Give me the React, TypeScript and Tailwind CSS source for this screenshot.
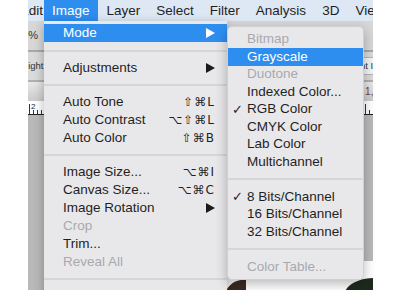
import React from 'react';

type Item =
  | { sep: true; h?: string }
  | { label: string; shortcut?: string; arrow?: boolean; disabled?: boolean; active?: boolean; checked?: boolean; sep?: false };

const menuBar = ['Image', 'Layer', 'Select', 'Filter', 'Analysis', '3D', 'View'];

const imageMenu: Item[] = [
  { label: 'Mode', arrow: true, active: true },
  { sep: true, h: 'h-[17px]' },
  { label: 'Adjustments', arrow: true },
  { sep: true },
  { label: 'Auto Tone', shortcut: '⇧⌘L' },
  { label: 'Auto Contrast', shortcut: '⌥⇧⌘L' },
  { label: 'Auto Color', shortcut: '⇧⌘B' },
  { sep: true },
  { label: 'Image Size...', shortcut: '⌥⌘I' },
  { label: 'Canvas Size...', shortcut: '⌥⌘C' },
  { label: 'Image Rotation', arrow: true },
  { label: 'Crop', disabled: true },
  { label: 'Trim...' },
  { label: 'Reveal All', disabled: true },
  { sep: true },
  { label: 'Duplicate...' },
  { label: 'Apply Image...' },
];

const modeMenu: Item[] = [
  { label: 'Bitmap', disabled: true },
  { label: 'Grayscale', active: true },
  { label: 'Duotone', disabled: true },
  { label: 'Indexed Color...' },
  { label: 'RGB Color', checked: true },
  { label: 'CMYK Color' },
  { label: 'Lab Color' },
  { label: 'Multichannel' },
  { sep: true },
  { label: '8 Bits/Channel', checked: true },
  { label: '16 Bits/Channel' },
  { label: '32 Bits/Channel' },
  { sep: true },
  { label: 'Color Table...', disabled: true },
];

const Arrow = ({ white }: { white?: boolean }) => (
  <svg width="9" height="10" viewBox="0 0 9 10">
    <polygon points="0,0 9,5 0,10" fill={white ? '#ffffff' : '#1a1a1a'} />
  </svg>
);

const textColor = (it: { disabled?: boolean; active?: boolean }) =>
  it.active ? 'text-white bg-[#2d8ef0]' : it.disabled ? 'text-[#a9a9ab]' : 'text-[#1f1f1f]';

const Ruler = () => (
  <svg width="345" height="13" className="block">
    {Array.from({ length: 88 }).map((_, i) => (
      <line key={i} x1={i * 4 + 1.5} x2={i * 4 + 1.5} y1={i % 4 === 0 ? 3 : 9} y2={13} stroke="#333" strokeWidth="1" />
    ))}
    <text x="3" y="8" fontSize="8" fill="#222" fontFamily="Liberation Sans">2</text>
  </svg>
);

const App: React.FC = () => {
  return (
    <div className="relative w-[402px] h-[290px] overflow-hidden bg-white font-['Liberation_Sans','DejaVu_Sans',sans-serif]">
      <div className="flex h-full">
        <div className="w-[28px] shrink-0 bg-white" />

        {/* app window */}
        <div className="w-[345px] shrink-0 flex flex-col overflow-hidden bg-[#b9b9b9]">
          <div className="h-[21px] shrink-0 flex items-center bg-[#dde8f4] text-[13.5px] text-[#1f1f1f] leading-[21px] whitespace-nowrap">
            <div className="w-[16px] shrink-0 flex justify-end overflow-hidden pr-[1px]">
              <span>Edit</span>
            </div>
            {menuBar.map((m) => (
              <span key={m} className={`px-2 ${m === 'Image' ? 'bg-[#2d8ef0] text-white' : ''} ${m === 'Layer' ? 'ml-[1px]' : ''}`}>
                {m}
              </span>
            ))}
          </div>

          <div className="h-[31px] shrink-0 flex items-center bg-[#d7d7d7] border-b-2 border-[#a8a8a8] text-[11px] text-[#333] whitespace-nowrap">
            <span className="ml-[-18px]">100%</span>
          </div>

          <div className="h-[30px] shrink-0 flex items-center bg-[#dadada] border-b-2 border-[#b0b0b0] text-[9.5px] text-[#333] whitespace-nowrap">
            <span className="ml-[-12px]">Height:</span>
            <span className="ml-auto mr-[-28px] px-[3px] py-[1px] bg-[#f4f4f4] border border-[#b5b5b5] rounded-[2px] text-[9.5px]">Front Image</span>
          </div>

          <div className="h-[19px] shrink-0 flex items-center bg-gradient-to-b from-[#e8e8e8] to-[#cbcbcb] text-[10px] whitespace-nowrap">
            <span className="ml-auto mr-[-6px] text-[#7a3a2a]">1,1</span>
          </div>

          <div className="h-[14px] shrink-0 bg-white border-b border-[#222] overflow-hidden">
            <Ruler />
          </div>

          <div className="flex-1 flex flex-col pt-[146px] pl-[140px]">
            <div className="flex-1 bg-white">
              <svg width="205" height="30" className="block">
                <path d="M58 30 C 62 22, 70 18, 78 19 L 78 30 Z" fill="#3b2a22" />
                <path d="M177 30 C 182 21, 195 17, 205 17 L 205 30 Z" fill="#1e2a1e" />
              </svg>
            </div>
          </div>
        </div>

        <div className="flex-1 bg-white" />
      </div>

      {/* Image menu */}
      <div className="absolute left-[44px] top-[21px] w-[183px] h-[300px] pt-[3px] bg-[#e8e8eb] shadow-[0_3px_10px_rgba(0,0,0,0.3)] text-[13.5px] whitespace-nowrap">
        {imageMenu.map((it, i) =>
          it.sep ? (
            <div key={i} className={`${it.h ?? 'h-[16px]'} flex items-center`}>
              <div className="w-full h-[2px] bg-[#d6d6d9]" />
            </div>
          ) : (
            <div key={i} className={`h-[18px] flex items-center justify-between pl-[19px] pr-[12px] ${textColor(it)}`}>
              <span>{it.label}</span>
              {it.arrow && <Arrow white={it.active} />}
              {it.shortcut && <span className="font-['DejaVu_Sans',sans-serif] text-[12px] tracking-[1px]">{it.shortcut}</span>}
            </div>
          )
        )}
      </div>

      {/* Mode submenu */}
      <div className="absolute left-[227px] top-[26px] w-[137px] h-[254px] pt-[3.5px] rounded-[5px] bg-[#e8e8eb] border border-[#d0d0d3] shadow-[0_4px_12px_rgba(0,0,0,0.28)] text-[13.5px] whitespace-nowrap overflow-hidden">
        {modeMenu.map((it, i) =>
          it.sep ? (
            <div key={i} className="h-[17.5px] flex items-center">
              <div className="w-full h-[2px] bg-[#d6d6d9]" />
            </div>
          ) : (
            <div key={i} className={`h-[17.5px] flex items-center ${textColor(it)}`}>
              <span className="w-[19px] pl-[4px] text-[13px] font-['DejaVu_Sans',sans-serif]">{it.checked ? '✓' : ''}</span>
              <span>{it.label}</span>
            </div>
          )
        )}
      </div>
    </div>
  );
};

export default App;
